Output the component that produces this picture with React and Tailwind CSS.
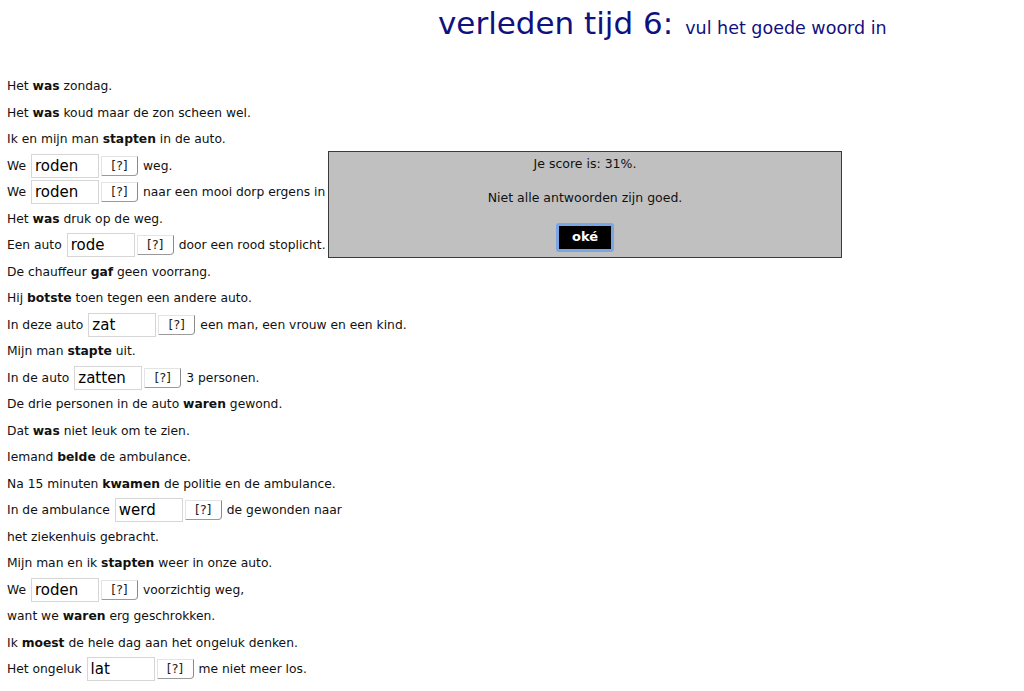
import React from 'react'

// each line: plain text, or [before, answer, after] for a fill-in line, bold marks the verb
const LINES = [
  ['Het ', { b: 'was' }, ' zondag.'],
  ['Het ', { b: 'was' }, ' koud maar de zon scheen wel.'],
  ['Ik en mijn man ', { b: 'stapten' }, ' in de auto.'],
  { gap: ['We', 'roden', 'weg.'] },
  { gap: ['We', 'roden', 'naar een mooi dorp ergens in'] },
  ['Het ', { b: 'was' }, ' druk op de weg.'],
  { gap: ['Een auto', 'rode', 'door een rood stoplicht.'] },
  ['De chauffeur ', { b: 'gaf' }, ' geen voorrang.'],
  ['Hij ', { b: 'botste' }, ' toen tegen een andere auto.'],
  { gap: ['In deze auto', 'zat', 'een man, een vrouw en een kind.'] },
  ['Mijn man ', { b: 'stapte' }, ' uit.'],
  { gap: ['In de auto', 'zatten', '3 personen.'] },
  ['De drie personen in de auto ', { b: 'waren' }, ' gewond.'],
  ['Dat ', { b: 'was' }, ' niet leuk om te zien.'],
  ['Iemand ', { b: 'belde' }, ' de ambulance.'],
  ['Na 15 minuten ', { b: 'kwamen' }, ' de politie en de ambulance.'],
  { gap: ['In de ambulance', 'werd', 'de gewonden naar'] },
  ['het ziekenhuis gebracht.'],
  ['Mijn man en ik ', { b: 'stapten' }, ' weer in onze auto.'],
  { gap: ['We', 'roden', 'voorzichtig weg,'] },
  ['want we ', { b: 'waren' }, ' erg geschrokken.'],
  ['Ik ', { b: 'moest' }, ' de hele dag aan het ongeluk denken.'],
  { gap: ['Het ongeluk', 'lat', 'me niet meer los.'] },
]

function Gap({ before, value, after }) {
  return (
    <div className="flex items-center h-[26.5px]">
      <span>{before}</span>
      <input
        readOnly
        value={value}
        className="ml-[5px] w-[68px] h-[24px] px-[3px] border border-[#d6d6d6] bg-white text-[15px] text-black outline-none"
      />
      <button className="ml-[2px] h-[20px] w-[37px] text-[12.5px] text-[#222] bg-white border border-[#e4e4e4] border-r-[#8a8a8a] border-b-[#9a9a9a] rounded-br-[4px] leading-none">
        [?]
      </button>
      <span className="ml-[5px]">{after}</span>
    </div>
  )
}

export default function App() {
  return (
    <div className="relative min-h-[691px] bg-white text-[#111] text-[12.3px] font-['DejaVu_Sans',sans-serif]">
      <div className="pl-[438px] pt-[3px] h-[73px] text-[#10107e] flex items-baseline">
        <span className="text-[31px] leading-[40px]">verleden tijd 6:</span>
        <span className="ml-[12px] text-[17.5px]">vul het goede woord in</span>
      </div>

      <div className="pl-[7px]">
        {LINES.map((line, i) =>
          line.gap ? (
            <Gap key={i} before={line.gap[0]} value={line.gap[1]} after={line.gap[2]} />
          ) : (
            <div key={i} className="h-[26.5px] flex items-center">
              <span className="whitespace-pre">
                {line.map((part, j) =>
                  typeof part === 'string' ? part : <b key={j} className="font-semibold">{part.b}</b>
                )}
              </span>
            </div>
          )
        )}
      </div>

      {/* score message */}
      <div className="absolute left-[328px] top-[151px] w-[514px] h-[107px] bg-[#c0c0c0] border border-[#3a3a3a] flex flex-col items-center text-[12.5px]">
        <div className="mt-[3px]">Je score is: 31%.</div>
        <div className="mt-[15px]">Niet alle antwoorden zijn goed.</div>
        <button className="mt-[15px] w-[58px] h-[29px] rounded-[3px] border-[3px] border-[#7aa7e3] bg-black text-white font-bold text-[13px]">
          oké
        </button>
      </div>
    </div>
  )
}
